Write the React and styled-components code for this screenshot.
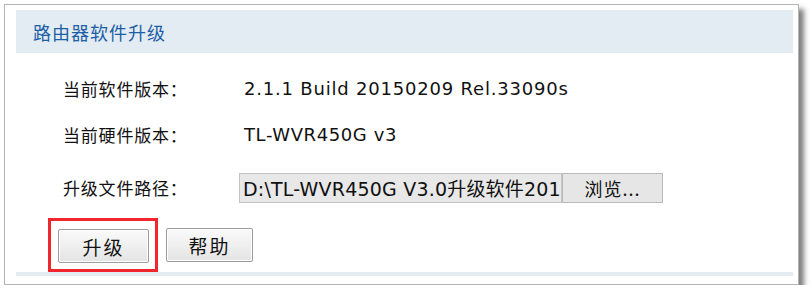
import styled, { createGlobalStyle } from 'styled-components';

const GlobalStyle = createGlobalStyle`
  body {
    margin: 0;
    background: #fff;
    font-family: "Noto Sans CJK SC", "DejaVu Sans", sans-serif;
  }
`;

const Frame = styled.div`
  margin: 4px 0 0 4px;
  width: 795px;
  box-sizing: border-box;
  border: 1px solid #b4b4b4;
  background: #fff;
  box-shadow: 5px 5px 5px rgba(0, 0, 0, 0.5);
  padding: 5px 5px 8px 11px;
`;

const Header = styled.div`
  height: 43px;
  background: #e3ebf3;
  display: flex;
  align-items: center;
  padding-left: 17px;
  color: #1b5ea6;
  font-size: 18px;
  letter-spacing: 1px;
`;

const Content = styled.div`
  padding: 12px 0 0 47px;
`;

const Row = styled.div`
  display: flex;
  align-items: center;
  height: ${(p) => p.$h}px;
`;

const Label = styled.div`
  width: 176px;
  flex: none;
  font-size: 17px;
  letter-spacing: 0.8px;
  color: #111;
`;

const Value = styled.div`
  padding-left: 5px;
  font-family: "DejaVu Sans", sans-serif;
  font-size: 18px;
  letter-spacing: ${(p) => p.$ls || 0.7}px;
  color: #111;
`;

const FileInput = styled.div`
  width: 323px;
  height: 30px;
  box-sizing: border-box;
  background: #e8e8e8;
  border: 1px solid #c4c4c4;
  display: flex;
  align-items: center;
  padding-left: 3px;
  overflow: hidden;
  white-space: nowrap;
  font-family: "DejaVu Sans", "Noto Sans CJK SC", sans-serif;
  font-size: 19px;
  letter-spacing: 0.2px;
  color: #111;
`;

const BrowseButton = styled.div`
  width: 101px;
  height: 30px;
  box-sizing: border-box;
  background: #e6e6e6;
  border: 1px solid #b8b8b8;
  display: flex;
  align-items: center;
  justify-content: center;
  font-size: 18px;
  color: #111;
  letter-spacing: 1px;
`;

const ButtonRow = styled.div`
  display: flex;
  align-items: center;
  height: 54px;
  margin-left: -15px;
`;

const Highlight = styled.div`
  border: 3px solid #f0262c;
  padding: 8px 6px 6px 7px;
  display: flex;
`;

const Button = styled.div`
  width: ${(p) => p.$w}px;
  height: 34px;
  box-sizing: border-box;
  margin-left: ${(p) => p.$ml || 0}px;
  border: 1px solid #9c9c9c;
  border-radius: 2px;
  background: linear-gradient(#fafafa, #e4e4e4);
  box-shadow: inset 0 0 0 1px #fff;
  display: flex;
  align-items: center;
  justify-content: center;
  font-size: 19px;
  letter-spacing: 2px;
  color: #111;
`;

const BottomLine = styled.div`
  height: 4px;
  background: #e3ebf3;
`;

export default function App() {
  return (
    <>
      <GlobalStyle />
      <Frame>
        <Header>路由器软件升级</Header>
        <Content>
          <Row $h={46}>
            <Label>当前软件版本：</Label>
            <Value $ls={0.8}>2.1.1 Build 20150209 Rel.33090s</Value>
          </Row>
          <Row $h={46}>
            <Label>当前硬件版本：</Label>
            <Value $ls={0.6}>TL-WVR450G v3</Value>
          </Row>
          <Row $h={61}>
            <Label>升级文件路径：</Label>
            <FileInput>D:\TL-WVR450G V3.0升级软件201</FileInput>
            <BrowseButton>浏览...</BrowseButton>
          </Row>
          <ButtonRow>
            <Highlight>
              <Button $w={91}>升级</Button>
            </Highlight>
            <Button $w={87} $ml={8}>帮助</Button>
          </ButtonRow>
        </Content>
        <BottomLine />
      </Frame>
    </>
  );
}
